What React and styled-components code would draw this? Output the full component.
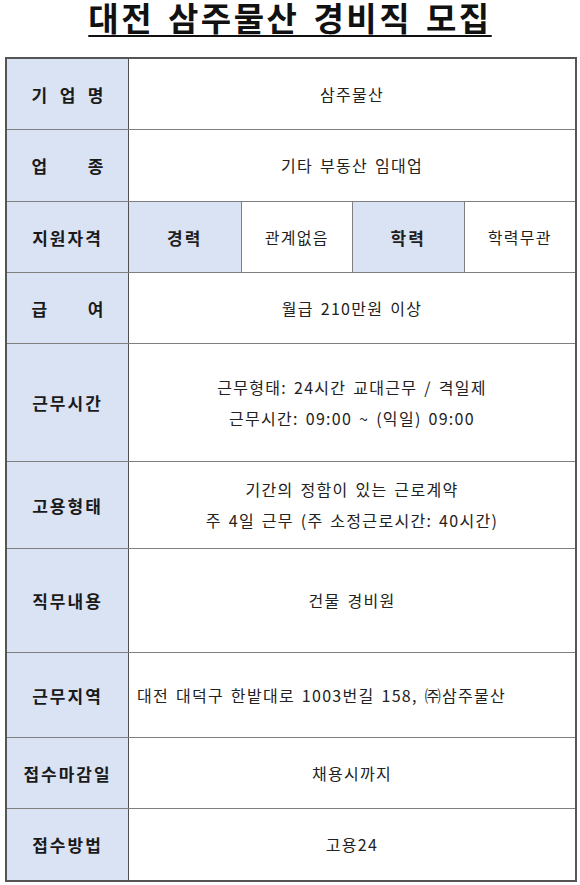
import React from "react";
import styled, { createGlobalStyle } from "styled-components";

const Global = createGlobalStyle`
  html, body { margin: 0; padding: 0; background: #ffffff; }
  body {
    font-family: "Noto Sans CJK KR", "Noto Sans", sans-serif;
    color: #1f1f1f;
  }
  * { box-sizing: border-box; }
`;

const Page = styled.div`
  width: 580px;
  display: flex;
  flex-direction: column;
  align-items: center;
  padding-top: 2px;
`;

const Title = styled.h1`
  margin: 0 0 24px;
  font-size: 33px;
  line-height: 31px;
  font-weight: 700;
  color: #111;
  letter-spacing: 2.5px;
  word-spacing: 4px;
  text-decoration: underline;
  text-decoration-thickness: 2px;
  text-underline-offset: 4px;
`;

const Sheet = styled.div`
  width: 572px;
  margin-left: 2px;
  border: 2px solid #555;
  display: flex;
  flex-direction: column;
`;

const Row = styled.div`
  display: grid;
  grid-template-columns: 122px 1fr;
  height: ${(p) => p.$h}px;
  border-bottom: ${(p) => (p.$last ? "none" : "1px solid #7f7f7f")};
`;

const Label = styled.div`
  background: #dae3f3;
  border-right: 1px solid #505050;
  display: flex;
  align-items: center;
  justify-content: center;
  font-size: 17px;
  font-weight: 700;
  letter-spacing: 2px;
  color: #1a1a1a;
`;

const Spread = styled.span`
  width: 72px;
  display: flex;
  justify-content: space-between;
  letter-spacing: 0;
`;

const Content = styled.div`
  display: flex;
  flex-direction: column;
  align-items: ${(p) => (p.$left ? "flex-start" : "center")};
  justify-content: center;
  padding-left: ${(p) => (p.$left ? "8px" : "0")};
  font-size: 16px;
  line-height: 31px;
  letter-spacing: 1.3px;
  word-spacing: 2px;
  color: #222;
`;

const Split = styled.div`
  display: grid;
  grid-template-columns: repeat(4, 1fr);
`;

const SubCell = styled.div`
  display: flex;
  align-items: center;
  justify-content: center;
  background: ${(p) => (p.$head ? "#dae3f3" : "#fff")};
  border-left: ${(p) => (p.$first ? "none" : "1px solid #7f7f7f")};
  font-size: ${(p) => (p.$head ? "17px" : "16px")};
  font-weight: ${(p) => (p.$head ? 700 : 400)};
  letter-spacing: ${(p) => (p.$head ? "2px" : "1.3px")};
  color: #1f1f1f;
`;

const spread = (t) => (
  <Spread>
    {t.split("").map((c, i) => (
      <span key={i}>{c}</span>
    ))}
  </Spread>
);

export default function App() {
  return (
    <>
      <Global />
      <Page>
        <Title>대전 삼주물산 경비직 모집</Title>
        <Sheet>
          <Row $h={71}>
            <Label>{spread("기업명")}</Label>
            <Content>삼주물산</Content>
          </Row>
          <Row $h={72}>
            <Label>{spread("업종")}</Label>
            <Content>기타 부동산 임대업</Content>
          </Row>
          <Row $h={71}>
            <Label>지원자격</Label>
            <Split>
              <SubCell $head $first>경력</SubCell>
              <SubCell>관계없음</SubCell>
              <SubCell $head>학력</SubCell>
              <SubCell>학력무관</SubCell>
            </Split>
          </Row>
          <Row $h={71}>
            <Label>{spread("급여")}</Label>
            <Content>월급 210만원 이상</Content>
          </Row>
          <Row $h={118}>
            <Label>근무시간</Label>
            <Content>
              <div>근무형태: 24시간 교대근무 / 격일제</div>
              <div>근무시간: 09:00 ~ (익일) 09:00</div>
            </Content>
          </Row>
          <Row $h={87}>
            <Label>고용형태</Label>
            <Content>
              <div>기간의 정함이 있는 근로계약</div>
              <div>주 4일 근무 (주 소정근로시간: 40시간)</div>
            </Content>
          </Row>
          <Row $h={104}>
            <Label>직무내용</Label>
            <Content>건물 경비원</Content>
          </Row>
          <Row $h={85}>
            <Label>근무지역</Label>
            <Content $left>대전 대덕구 한밭대로 1003번길 158, ㈜삼주물산</Content>
          </Row>
          <Row $h={71}>
            <Label>접수마감일</Label>
            <Content>채용시까지</Content>
          </Row>
          <Row $h={71} $last>
            <Label>접수방법</Label>
            <Content>고용24</Content>
          </Row>
        </Sheet>
      </Page>
    </>
  );
}
